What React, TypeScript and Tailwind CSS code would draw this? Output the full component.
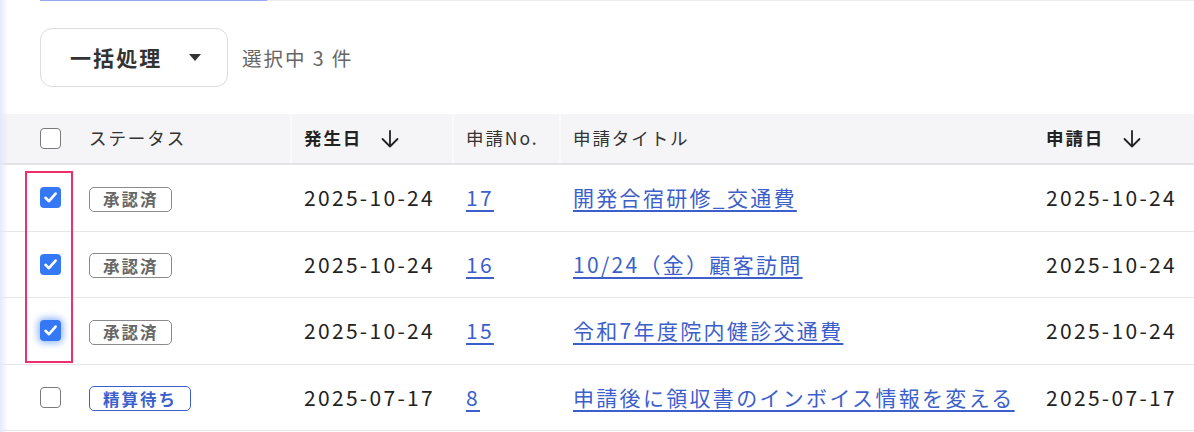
type Status = "approved" | "pending";

type Row = {
  checked: boolean;
  focused?: boolean;
  status: Status;
  occurred: string;
  no: string;
  title: string;
  applied: string;
};

const rows: Row[] = [
  { checked: true, status: "approved", occurred: "2025-10-24", no: "17", title: "開発合宿研修_交通費", applied: "2025-10-24" },
  { checked: true, status: "approved", occurred: "2025-10-24", no: "16", title: "10/24（金）顧客訪問", applied: "2025-10-24" },
  { checked: true, focused: true, status: "approved", occurred: "2025-10-24", no: "15", title: "令和7年度院内健診交通費", applied: "2025-10-24" },
  { checked: false, status: "pending", occurred: "2025-07-17", no: "8", title: "申請後に領収書のインボイス情報を変える", applied: "2025-07-17" },
];

const cols = "grid grid-cols-[75px_215px_162px_107px_473px_1fr]";

function Checkbox({ checked, focused }: { checked: boolean; focused?: boolean }) {
  if (!checked) {
    return <div className="ml-[40px] h-[21px] w-[21px] rounded-[4px] border-[1.5px] border-[#7a7a7a] bg-white" />;
  }
  return (
    <div
      className={`ml-[40px] flex h-[21px] w-[21px] items-center justify-center rounded-[4px] bg-[#3478f6] ${
        focused ? "shadow-[0_0_7px_2px_rgba(52,120,246,0.55)]" : ""
      }`}
    >
      <svg width="15" height="15" viewBox="0 0 15 15" fill="none">
        <path d="M2.5 7.8 L6 11.2 L12.6 3.6" stroke="white" strokeWidth="2.6" strokeLinecap="round" strokeLinejoin="round" />
      </svg>
    </div>
  );
}

function SortArrow() {
  return (
    <svg width="20" height="18" viewBox="0 0 20 18" fill="none" className="ml-[18px]">
      <path d="M10 1 V16.5 M2.5 9 L10 16.5 L17.5 9" stroke="#222" strokeWidth="1.8" strokeLinecap="round" strokeLinejoin="round" />
    </svg>
  );
}

function Badge({ status }: { status: Status }) {
  if (status === "pending") {
    return (
      <span className="inline-flex h-[25px] items-center rounded-[5px] border-[1.5px] border-[#3d5fcc] px-[13px] text-[16.5px] font-bold tracking-[0.12em] text-[#3d5fcc]">
        精算待ち
      </span>
    );
  }
  return (
    <span className="inline-flex h-[25px] items-center rounded-[5px] border-[1.5px] border-[#8a8a8a] px-[13px] text-[16.5px] font-bold tracking-[0.12em] text-[#666]">
      承認済
    </span>
  );
}

export default function App() {
  return (
    <div
      className="relative h-[432px] w-[1194px] overflow-hidden bg-white text-[#222]"
      style={{ fontFamily: '"Noto Sans CJK JP", "Noto Sans", sans-serif' }}
    >
      {/* left edge shade */}
      <div className="pointer-events-none absolute inset-y-0 left-0 w-[8px] bg-gradient-to-r from-[#e4e8fb] to-transparent" />

      {/* tab underline */}
      <div className="flex h-px">
        <div className="w-[40px]" />
        <div className="w-[227px] bg-[#97a8f0]" />
        <div className="flex-1 bg-[#ececef]" />
      </div>

      {/* bulk action toolbar */}
      <div className="flex items-center gap-[14px] pt-[27px] pl-[40px]">
        <button className="flex h-[59px] w-[188px] items-center rounded-[12px] border border-[#dcdcdc] bg-white pl-[29px] pr-[26px]">
          <span className="text-[21px] font-bold tracking-[0.1em] text-[#333]">一括処理</span>
          <span className="ml-auto h-0 w-0 border-x-[6.5px] border-t-[7px] border-x-transparent border-t-[#333]" />
        </button>
        <span className="text-[19.5px] tracking-[0.1em] text-[#666]">選択中 3 件</span>
      </div>

      {/* table */}
      <div className="mt-[27px]">
        <div className={`${cols} h-[51px] border-b-2 border-[#e3e3e6] bg-[#f5f4f6] text-[17.5px] tracking-[0.11em] text-[#333]`}>
          <div className="flex items-center">
            <Checkbox checked={false} />
          </div>
          <div className="flex items-center pl-[14px]">ステータス</div>
          <div className="flex items-center border-l-2 border-[#fafafa] pl-[12px] font-bold text-[#222]">
            発生日
            <SortArrow />
          </div>
          <div className="flex items-center border-l-2 border-[#fafafa] pl-[12px]">申請No.</div>
          <div className="flex items-center border-l-2 border-[#fafafa] pl-[12px]">申請タイトル</div>
          <div className="flex items-center pl-[14px] font-bold text-[#222]">
            申請日
            <SortArrow />
          </div>
        </div>

        {rows.map((r) => (
          <div key={r.no} className={`${cols} h-[66.5px] items-center border-b border-[#e6e6e8] text-[21px] tracking-[0.11em]`}>
            <div>
              <Checkbox checked={r.checked} focused={r.focused} />
            </div>
            <div className="pl-[14px]">
              <Badge status={r.status} />
            </div>
            <div className="pl-[14px] text-[#222]">{r.occurred}</div>
            <div className="pl-[14px]">
              <a href="#" className="text-[#3d5fcc] underline decoration-[1.5px] underline-offset-[4px]">
                {r.no}
              </a>
            </div>
            <div className="pl-[14px]">
              <a href="#" className="whitespace-nowrap text-[#3d5fcc] underline decoration-[1.5px] underline-offset-[4px]">
                {r.title}
              </a>
            </div>
            <div className="pl-[14px] text-[#222]">{r.applied}</div>
          </div>
        ))}
      </div>

      {/* selection highlight */}
      <div className="pointer-events-none absolute left-[25px] top-[171px] h-[192px] w-[48px] border-2 border-[#ee2f6c]" />
    </div>
  );
}
